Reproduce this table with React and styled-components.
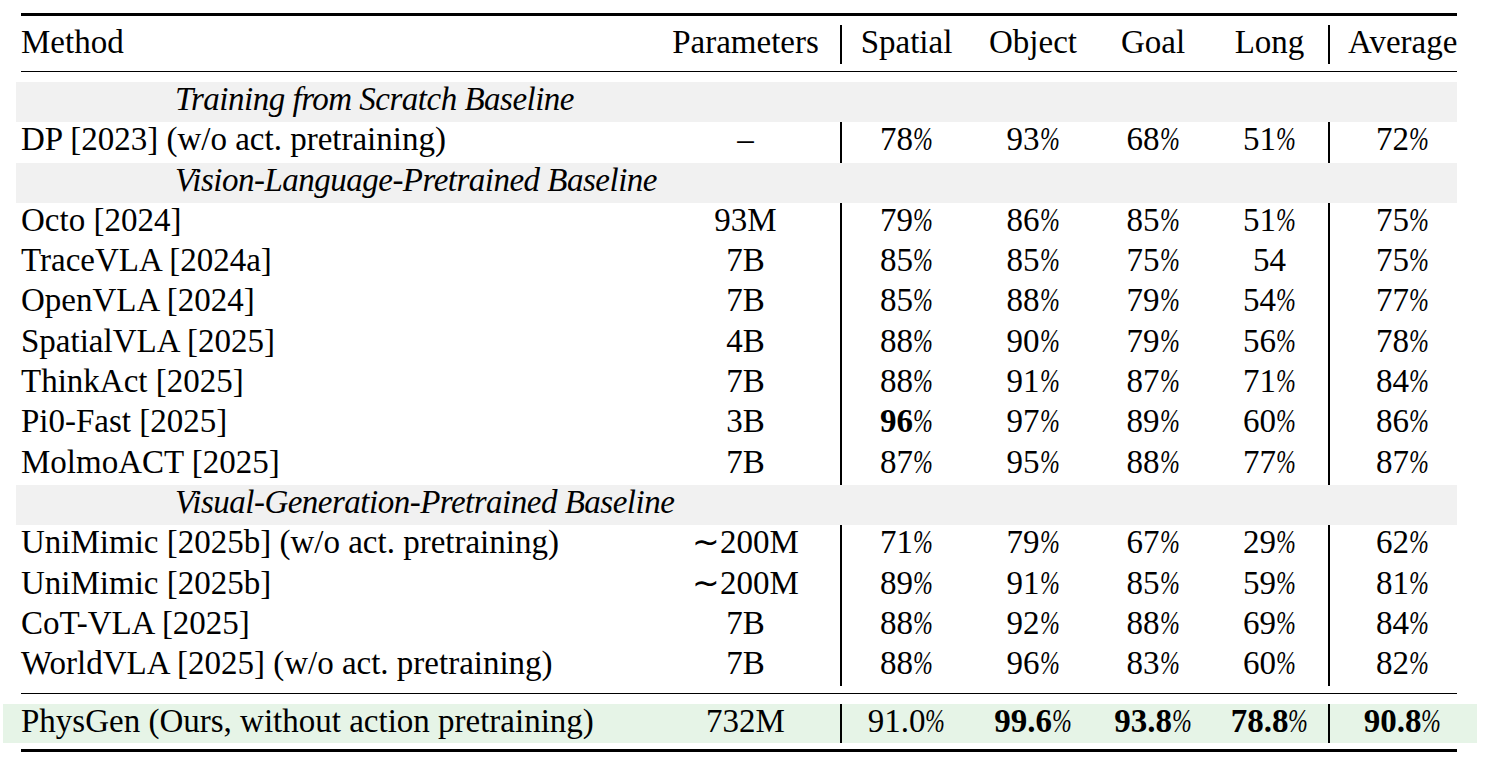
import React from 'react';
import styled, { createGlobalStyle } from 'styled-components';

const GlobalStyle = createGlobalStyle`
  html, body {
    margin: 0;
    padding: 0;
    background: #fff;
  }
  body {
    font-family: "Liberation Serif", "Times New Roman", serif;
    color: #000;
  }
`;

// Method | Parameters | Spatial | Object | Goal | Long | Average
const COLS = '630px 189px 131px 124px 116px 117px 129px';

const Table = styled.div`
  width: 1436px;
  margin-left: 21px;
  padding-top: 13px;
  font-size: 33px;
`;

const Rule = styled.div`
  height: ${p => (p.$thick ? '3px' : '1px')};
  background: #000;
  margin-top: ${p => p.$top || 0}px;
`;

const Row = styled.div`
  display: grid;
  grid-template-columns: ${COLS};
  height: ${p => p.$h || 40.3}px;
  margin-top: ${p => p.$top || 0}px;
  line-height: 35px;
`;

const OursRow = styled(Row)`
  background: #e6f4e7;
  margin-left: -18px;
  margin-right: -20px;
  padding: 0 20px 0 18px;
`;

const GroupRow = styled.div`
  height: 40.3px;
  line-height: 35px;
  background: #f1f1f1;
  margin-left: -5px;
  padding-left: 159px;
  font-style: italic;
  letter-spacing: -0.5px;
  white-space: nowrap;
`;

const Cell = styled.div`
  box-sizing: border-box;
  white-space: nowrap;
  text-align: ${p => (p.$left ? 'left' : 'center')};
  border-left: ${p => (p.$sep ? '2px solid #000' : 'none')};
  padding-left: ${p => (p.$last ? 18 : 0)}px;
`;

const Bold = styled.span`
  font-weight: 700;
`;

// narrow slanted percent sign, like the one in the typeset table
const Pct = styled.span`
  display: inline-block;
  width: 0.6em;
  font-style: italic;
  font-weight: 400;
  text-align: left;
  transform: scaleX(0.72);
  transform-origin: left center;
`;

const groups = {
  scratch: 'Training from Scratch Baseline',
  vl: 'Vision-Language-Pretrained Baseline',
  vg: 'Visual-Generation-Pretrained Baseline',
};

// values: '*' prefix = bold number, '~' suffix = no percent sign
const rows = [
  { group: groups.scratch },
  { m: 'DP [2023] (w/o act. pretraining)', p: '–', v: ['78', '93', '68', '51', '72'] },
  { group: groups.vl },
  { m: 'Octo [2024]', p: '93M', v: ['79', '86', '85', '51', '75'] },
  { m: 'TraceVLA [2024a]', p: '7B', v: ['85', '85', '75', '54~', '75'] },
  { m: 'OpenVLA [2024]', p: '7B', v: ['85', '88', '79', '54', '77'] },
  { m: 'SpatialVLA [2025]', p: '4B', v: ['88', '90', '79', '56', '78'] },
  { m: 'ThinkAct [2025]', p: '7B', v: ['88', '91', '87', '71', '84'] },
  { m: 'Pi0-Fast [2025]', p: '3B', v: ['*96', '97', '89', '60', '86'] },
  { m: 'MolmoACT [2025]', p: '7B', v: ['87', '95', '88', '77', '87'] },
  { group: groups.vg },
  { m: 'UniMimic [2025b] (w/o act. pretraining)', p: '∼200M', v: ['71', '79', '67', '29', '62'] },
  { m: 'UniMimic [2025b]', p: '∼200M', v: ['89', '91', '85', '59', '81'] },
  { m: 'CoT-VLA [2025]', p: '7B', v: ['88', '92', '88', '69', '84'] },
  { m: 'WorldVLA [2025] (w/o act. pretraining)', p: '7B', v: ['88', '96', '83', '60', '82'] },
];

const ours = {
  m: 'PhysGen (Ours, without action pretraining)',
  p: '732M',
  v: ['91.0', '*99.6', '*93.8', '*78.8', '*90.8'],
};

function Value({ raw }) {
  const bold = raw.startsWith('*');
  const noPct = raw.endsWith('~');
  const num = raw.replace('*', '').replace('~', '');
  return (
    <>
      {bold ? <Bold>{num}</Bold> : num}
      {!noPct && <Pct>%</Pct>}
    </>
  );
}

function Cells({ row }) {
  return (
    <>
      <Cell $left>{row.m}</Cell>
      <Cell>{row.p}</Cell>
      {row.v.map((val, i) => (
        <Cell key={i} $sep={i === 0 || i === 4} $last={i === 4}>
          <Value raw={val} />
        </Cell>
      ))}
    </>
  );
}

export default function App() {
  return (
    <>
      <GlobalStyle />
      <Table>
        <Rule $thick />
        <Row $h={39} $top={9}>
          <Cell $left>Method</Cell>
          <Cell>Parameters</Cell>
          <Cell $sep>Spatial</Cell>
          <Cell>Object</Cell>
          <Cell>Goal</Cell>
          <Cell>Long</Cell>
          <Cell $sep $last>Average</Cell>
        </Row>
        <Rule $top={7} />
        <div style={{ height: 10 }} />
        {rows.map((row, i) =>
          row.group ? (
            <GroupRow key={i}>{row.group}</GroupRow>
          ) : (
            <Row key={i}>
              <Cells row={row} />
            </Row>
          )
        )}
        <Rule $top={7} />
        <OursRow $h={39.5} $top={9.5}>
          <Cells row={ours} />
        </OursRow>
        <Rule $thick $top={5.8} />
      </Table>
    </>
  );
}
